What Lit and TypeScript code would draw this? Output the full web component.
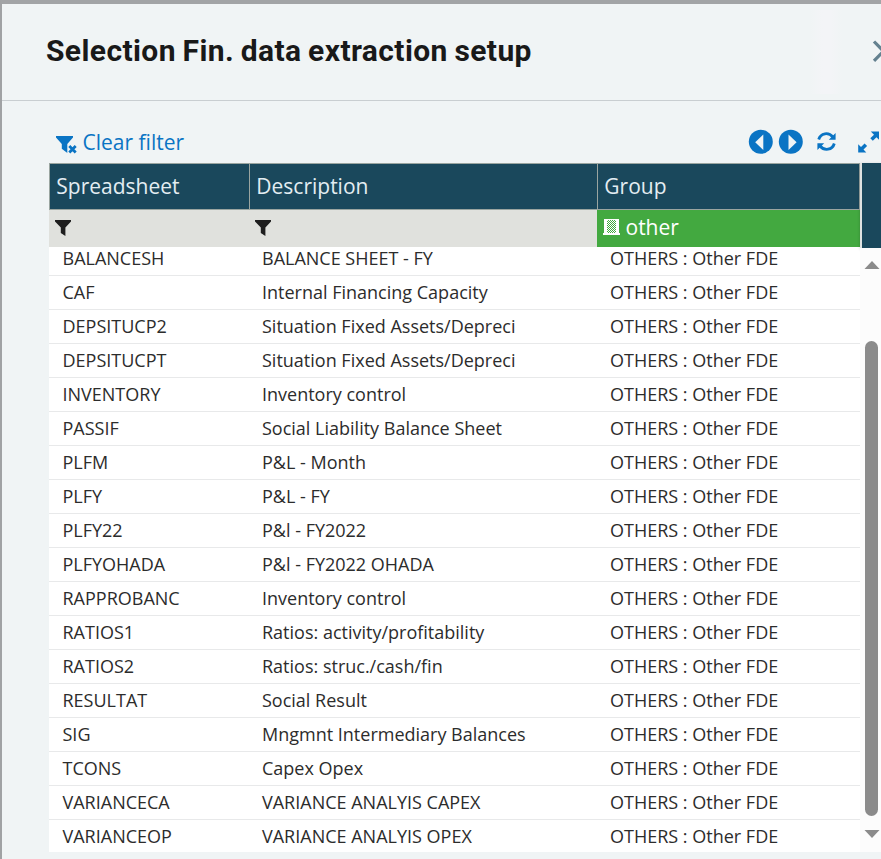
import { LitElement, html, css, svg } from "lit";
import { customElement } from "lit/decorators.js";

const ROWS: [string, string][] = [
  ["BALANCESH", "BALANCE SHEET - FY"],
  ["CAF", "Internal Financing Capacity"],
  ["DEPSITUCP2", "Situation Fixed Assets/Depreci"],
  ["DEPSITUCPT", "Situation Fixed Assets/Depreci"],
  ["INVENTORY", "Inventory control"],
  ["PASSIF", "Social Liability Balance Sheet"],
  ["PLFM", "P&L - Month"],
  ["PLFY", "P&L - FY"],
  ["PLFY22", "P&l - FY2022"],
  ["PLFYOHADA", "P&l - FY2022 OHADA"],
  ["RAPPROBANC", "Inventory control"],
  ["RATIOS1", "Ratios: activity/profitability"],
  ["RATIOS2", "Ratios: struc./cash/fin"],
  ["RESULTAT", "Social Result"],
  ["SIG", "Mngmnt Intermediary Balances"],
  ["TCONS", "Capex Opex"],
  ["VARIANCECA", "VARIANCE ANALYIS CAPEX"],
  ["VARIANCEOP", "VARIANCE ANALYIS OPEX"],
];

const funnel = svg`<path d="M0 0h16v1.6L10.4 7.6V16L5.8 13V7.6L0 1.6z"/>`;

@customElement("app-root")
export class AppRoot extends LitElement {
  static styles = css`
    :host {
      display: flex;
      flex-direction: column;
      box-sizing: border-box;
      width: 881px;
      height: 859px;
      overflow: hidden;
      border-top: 4px solid #a2a4a6;
      border-left: 2px solid #a0a2a4;
      background: #f0f4f5;
      font-family: "Open Sans", "Noto Sans", sans-serif;
      color: #2c2c2c;
    }
    svg { display: block; flex: none; overflow: visible; }
    .head {
      display: flex;
      align-items: center;
      justify-content: space-between;
      box-sizing: border-box;
      height: 97px;
      padding-left: 44px;
      border-bottom: 1px solid #c9ced1;
      position: relative;
    }
    .title {
      margin: 0;
      padding-bottom: 2px;
      font: 700 30px/40px Roboto, sans-serif;
      letter-spacing: 0.4px;
      word-spacing: -1.2px;
      color: #191919;
      white-space: nowrap;
    }
    .sheen {
      position: absolute;
      left: 808px;
      top: 6px;
      width: 32px;
      height: 84px;
      background: linear-gradient(90deg, #f3f4f700, #f3f4f7 40%, #f3f4f7 65%, #f3f4f700);
    }
    .close { margin-bottom: 3px; }
    .tools {
      display: flex;
      align-items: center;
      height: 62px;
      padding-left: 54px;
      box-sizing: border-box;
      color: #0a74c4;
      fill: #0a74c4;
    }
    .clear {
      display: flex;
      flex: 1;
      padding-top: 20px;
      font-size: 21px;
      line-height: 30px;
      white-space: nowrap;
    }
    .clear svg { margin: 9px 5.5px 0 0; }
    .actions { display: flex; align-items: center; padding-top: 19px; }
    .a1 { margin-right: 6px; }
    .a2 { margin-right: 14px; }
    .a3 { margin-right: 22px; }
    .area { display: flex; height: 689px; padding-left: 47px; }
    .grid { width: 811px; flex: none; }
    .cols { display: grid; grid-template-columns: 200px 348px 263px; }
    .th {
      box-sizing: border-box;
      height: 47px;
      border: 1px solid #9aa5a0;
      border-right: 0;
      padding-left: 6.3px;
      background: #1a485c;
      color: #e3edf2;
      font-size: 21px;
      line-height: 45px;
    }
    .th:last-child { border-right: 1px solid #9aa5a0; }
    .filter {
      box-sizing: border-box;
      display: flex;
      align-items: center;
      height: 37px;
      padding: 0 0 2px 6px;
      background: #e0e1dd;
      fill: #1e1e1e;
    }
    .green { background: #43a940; color: #fff; fill: #fff; font-size: 21px; line-height: 34px; padding: 0 0 3px 6px; }
    .green svg { margin-right: 5.5px; }
    .body {
      height: 605px;
      overflow: hidden;
      display: flex;
      flex-direction: column;
      justify-content: flex-end;
      background: #fff;
    }
    .rows { flex: none; margin-bottom: -2px; }
    .row {
      box-sizing: border-box;
      height: 34px;
      border-bottom: 1px solid #e8e9ea;
      font-size: 18px;
      line-height: 33px;
      white-space: nowrap;
    }
    .row span { padding-left: 13px; }
    .row span:first-child { padding-left: 13.5px; }
    .side { width: 21px; display: flex; flex-direction: column; }
    .cap {
      height: 85px;
      border-left: 2px solid #dfe3e2;
      background: #1a485c;
      box-shadow: 0 1px 3px #0003;
    }
    .bar {
      flex: 1;
      display: flex;
      flex-direction: column;
      background: #fcfcfc;
      fill: #8b8b8b;
      padding-left: 4px;
    }
    .up { margin-top: 13px; }
    .thumb { width: 13px; height: 475px; margin: 72px 0 14px 1px; border-radius: 7px; background: #8b8b8b; }
  `;

  render() {
    return html`
      <div class="head">
        <h1 class="title">Selection Fin. data extraction setup</h1>
        <div class="sheen"></div>
        <svg class="close" width="8" height="24" viewBox="0 0 8 24" fill="none" stroke="#64818f" stroke-width="3.2"><path d="M1 2.5 10.5 12.2 1 21.9"/></svg>
      </div>
      <div class="tools">
        <div class="clear">
          <svg width="21" height="18" viewBox="0 0 21 18"><path d="M0 0h17v1.5L11.3 8v9L5.8 12.8V8L0 1.5z"/><path d="m13.6 10.6 6 6m0-6-6 6" fill="none" stroke="#f0f4f5" stroke-width="4.8"/><path d="m13.3 10.1 6.4 6.4m0-6.4-6.4 6.4" fill="none" stroke="#0a74c4" stroke-width="2.8"/></svg>
          <span>Clear filter</span>
        </div>
        <div class="actions">
          <svg class="a1" width="24" height="24" viewBox="0 0 24 24"><circle cx="11.8" cy="11.8" r="12"/><path d="M14.3 4.5v15.4L6.2 12.2z" fill="#f0f4f5"/></svg>
          <svg class="a2" width="24" height="24" viewBox="0 0 24 24"><circle cx="11.8" cy="11.8" r="12"/><path d="M9.5 4.5v15.4l8.1-7.7z" fill="#f0f4f5"/></svg>
          <svg class="a3" width="19" height="19" viewBox="0 0 19 19"><path d="M1.7 7.5C3.6.8 11.7-.2 15.9 5M17.3 11.5C15.4 18.2 7.3 19.2 3.1 14" fill="none" stroke="#0a74c4" stroke-width="2.8"/><path d="M18.6 1v6.8h-6.8zM.4 18v-6.8h6.8z"/></svg>
          <svg width="23" height="22" viewBox="0 0 23 22"><path d="M12.8.6h8.2v8.2l-2.5-2.6-3.7 3.6-2.5-2.5L16 3.7zM.2 21.4v-8.2l2.8 2.8 3.6-3.6 2.5 2.5-3.6 3.6 2.8 2.9z"/></svg>
        </div>
      </div>
      <div class="area">
        <div class="grid">
          <div class="cols">
            <div class="th">Spreadsheet</div>
            <div class="th">Description</div>
            <div class="th">Group</div>
          </div>
          <div class="cols">
            <div class="filter"><svg width="16" height="16" viewBox="0 0 16 16">${funnel}</svg></div>
            <div class="filter"><svg width="16" height="16" viewBox="0 0 16 16">${funnel}</svg></div>
            <div class="filter green">
              <svg width="17" height="16" viewBox="0 0 17 16">
                <defs><pattern id="dots" width="2" height="2" patternUnits="userSpaceOnUse"><path d="M0 0h1v1H0zM1 1h1v1H1z" fill="#43a940"/></pattern></defs>
                <path d="M1 0h15v14h1v2H0v-2h1z"/><path d="M4 1h9v13H4z" fill="url(#dots)"/>
              </svg>
              <span>other</span>
            </div>
          </div>
          <div class="body">
            <div class="rows">
              ${ROWS.map(([code, text]) => html`
                <div class="cols row"><span>${code}</span><span>${text}</span><span>OTHERS : Other FDE</span></div>`)}
            </div>
          </div>
        </div>
        <div class="side">
          <div class="cap"></div>
          <div class="bar">
            <svg class="up" width="16" height="8" viewBox="0 0 16 8"><path d="M8 0l7.5 8H.5z"/></svg>
            <div class="thumb"></div>
            <svg width="16" height="8" viewBox="0 0 16 8"><path d="M8 8L.5 0h15z"/></svg>
          </div>
        </div>
      </div>
    `;
  }
}
